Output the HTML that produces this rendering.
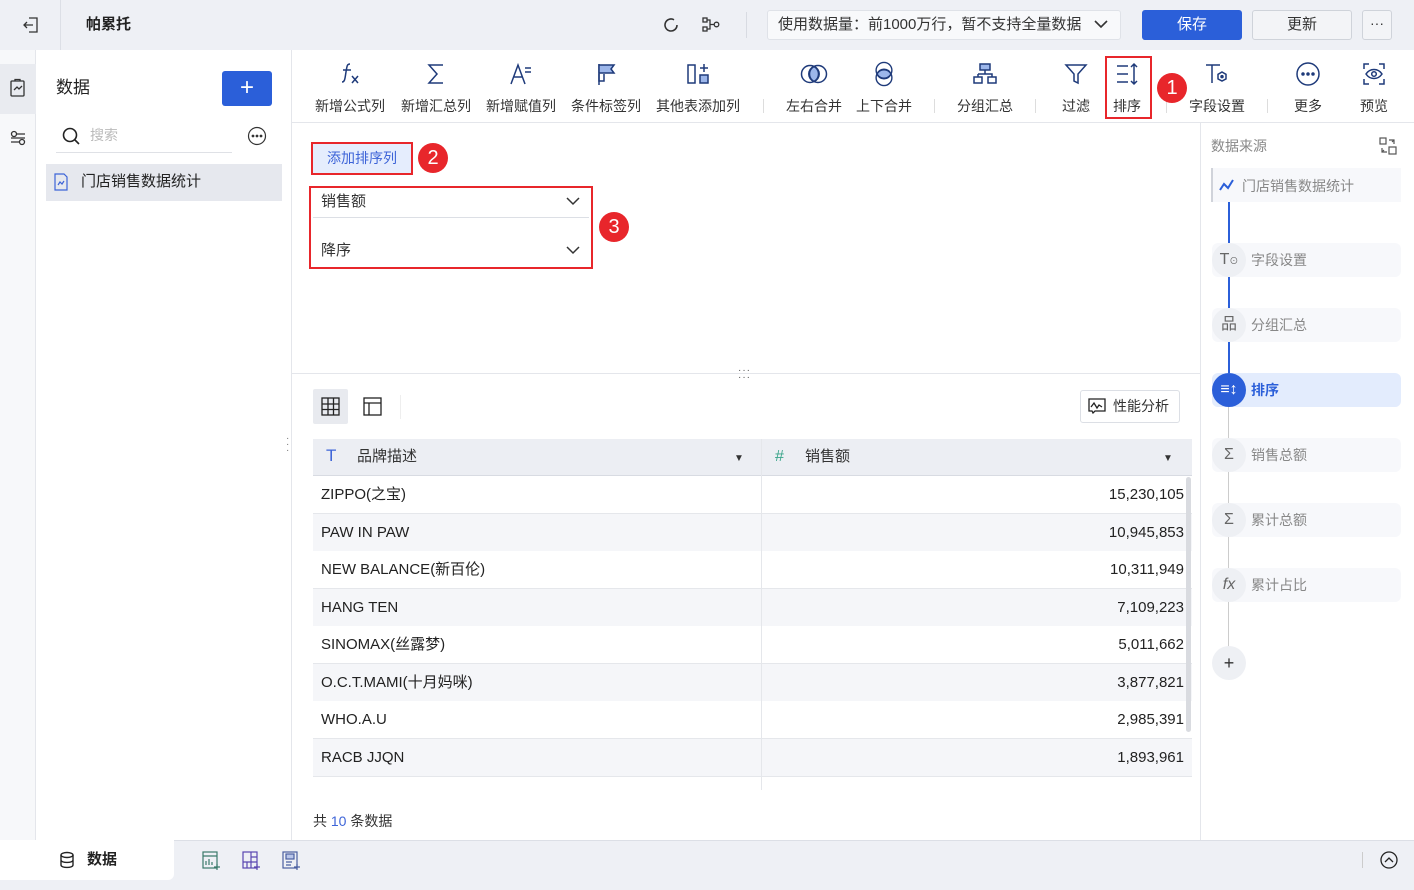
<!DOCTYPE html>
<html><head><meta charset="utf-8"><style>
*{box-sizing:border-box;margin:0;padding:0}
body{width:1414px;height:890px;overflow:hidden;position:relative;background:#fff;font-family:"Liberation Sans","Noto Sans CJK SC",sans-serif;color:#333;font-size:14px;line-height:18px}
.a{position:absolute}
.tb{text-align:center;width:90px;font-size:14px;color:#333;line-height:18px}
.tb svg{display:block;margin:0 auto 10px}
.sep{position:absolute;top:99px;width:1px;height:14px;background:#ddd}
.badge{position:absolute;width:30px;height:30px;border-radius:50%;background:#e8262b;color:#fff;font-size:20px;text-align:center;line-height:30px}
.row{position:absolute;left:313px;width:879px;height:38px;border-bottom:1px solid #e5e7eb;font-size:15px;color:#222;line-height:37px}
.row span{position:absolute;top:0}
.step{position:absolute;left:1212px;width:189px;height:34px;border-radius:6px;background:#f7f8fb;font-size:14px;color:#888}
.step i{position:absolute;left:0;top:0;width:34px;height:34px;border-radius:50%;background:#eef0f4;font-style:normal;text-align:center;line-height:34px;color:#666;font-size:16px}
.step b{position:absolute;left:39px;top:8px;font-weight:normal}
</style></head><body>
<!-- top bar -->
<div class="a" style="left:0;top:0;width:1414px;height:50px;background:#eef0f5"></div>
<div class="a" style="left:60px;top:0;width:1px;height:50px;background:#dcdfe6"></div>
<svg class="a" style="left:21px;top:15px" width="20" height="20" viewBox="0 0 20 20" fill="none" stroke="#333" stroke-width="1.3"><path d="M8 3h8v14H8M3 10h9M6 7l-3 3 3 3"/></svg>
<div class="a" style="left:86px;top:16px;font-size:15px;font-weight:bold;color:#222">帕累托</div>
<svg class="a" style="left:661px;top:15px" width="20" height="20" viewBox="0 0 20 20" fill="none" stroke="#333" stroke-width="1.6"><path d="M16 10a6 6 0 1 1-3-5.2M16 10a6 6 0 0 1-3 5.2"/></svg>
<svg class="a" style="left:701px;top:16px" width="20" height="18" viewBox="0 0 20 18" fill="none" stroke="#333" stroke-width="1.3"><rect x="2" y="2" width="4" height="4"/><rect x="2" y="11" width="4" height="4"/><path d="M6 4h3v9H6M9 8.5h4"/><circle cx="15.5" cy="8.5" r="2.3"/></svg>
<div class="a" style="left:746px;top:12px;width:1px;height:26px;background:#d8dbe2"></div>
<div class="a" style="left:767px;top:10px;width:354px;height:30px;background:#f8f9fb;border:1px solid #dfe2e8;border-radius:3px;font-size:15px;color:#333;padding:0 0 0 10px;line-height:28px">使用数据量：前1000万行，暂不支持全量数据</div>
<svg class="a" style="left:1093px;top:18px" width="16" height="12" viewBox="0 0 16 12" fill="none" stroke="#333" stroke-width="1.6"><path d="M2 3l6 6 6-6"/></svg>
<div class="a" style="left:1142px;top:10px;width:100px;height:30px;background:#2b5fd9;border-radius:3px;color:#fff;font-size:15px;text-align:center;line-height:30px">保存</div>
<div class="a" style="left:1252px;top:10px;width:100px;height:30px;background:#f3f4f7;border:1px solid #cfd3da;border-radius:3px;font-size:15px;text-align:center;line-height:28px">更新</div>
<div class="a" style="left:1362px;top:10px;width:30px;height:30px;background:#f3f4f7;border:1px solid #cfd3da;border-radius:3px;text-align:center;line-height:24px;font-size:14px">···</div>

<!-- left rail -->
<div class="a" style="left:0;top:50px;width:36px;height:790px;background:#f7f8fa;border-right:1px solid #e4e6eb"></div>
<div class="a" style="left:0;top:64px;width:36px;height:50px;background:#e9ebf0"></div>
<svg class="a" style="left:8px;top:78px" width="20" height="20" viewBox="0 0 20 20" fill="none" stroke="#333" stroke-width="1.3"><rect x="3" y="3" width="13" height="15" rx="1"/><path d="M7 3V1.5h5V3M6 12l3-3 2 2 3-3"/></svg>
<svg class="a" style="left:8px;top:128px" width="20" height="20" viewBox="0 0 20 20" fill="none" stroke="#333" stroke-width="1.3"><circle cx="6" cy="6" r="2.5"/><circle cx="14" cy="14" r="2.5"/><path d="M9 6h8M3 14h8M3 10h14"/></svg>
<!-- sidebar -->
<div class="a" style="left:36px;top:50px;width:256px;height:790px;background:#fff;border-right:1px solid #e4e6eb"></div>
<div class="a" style="left:56px;top:79px;font-size:17px;color:#222">数据</div>
<div class="a" style="left:222px;top:71px;width:50px;height:35px;background:#2b5fd9;border-radius:3px;color:#fff;font-size:24px;text-align:center;line-height:33px">+</div>
<svg class="a" style="left:61px;top:126px" width="20" height="20" viewBox="0 0 20 20" fill="none" stroke="#222" stroke-width="1.6"><circle cx="9" cy="9" r="6.5"/><path d="M14 14l4 4"/></svg>
<div class="a" style="left:90px;top:126px;font-size:14px;color:#bbb">搜索</div>
<div class="a" style="left:56px;top:152px;width:176px;height:1px;background:#dfe1e6"></div>
<svg class="a" style="left:247px;top:126px" width="20" height="20" viewBox="0 0 20 20" fill="none" stroke="#333" stroke-width="1.2"><circle cx="10" cy="10" r="8.5"/><circle cx="6" cy="10" r=".8" fill="#333"/><circle cx="10" cy="10" r=".8" fill="#333"/><circle cx="14" cy="10" r=".8" fill="#333"/></svg>
<div class="a" style="left:46px;top:164px;width:236px;height:37px;background:#e6e8ee"></div>
<svg class="a" style="left:53px;top:173px" width="16" height="18" viewBox="0 0 16 18" fill="none" stroke="#3d64d8" stroke-width="1.2"><path d="M2 1h9l3 3v13H2z"/><path d="M5 12l2-3 2 2 2-3"/></svg>
<div class="a" style="left:81px;top:173px;font-size:15px;color:#222">门店销售数据统计</div>
<div class="a" style="left:286px;top:436px;color:#777;font-size:10px;line-height:6px">·<br>·<br>·</div>

<!-- toolbar -->
<div class="a" style="left:292px;top:122px;width:1122px;height:1px;background:#e4e6eb"></div>
<div class="a tb" style="left:305px;top:61px"><svg width="26" height="26" viewBox="0 0 26 26" fill="none" stroke="#1e3a7a" stroke-width="1.5"><path d="M13 3c-3 0-3 2-4 8s-1 10-4 10M6 9h8M15 15l6 7M21 15l-6 7"/></svg>新增公式列</div>
<div class="a tb" style="left:391px;top:61px"><svg width="26" height="26" viewBox="0 0 26 26" fill="none" stroke="#1e3a7a" stroke-width="1.5"><path d="M20 4H6l8 9-8 9h14"/></svg>新增汇总列</div>
<div class="a tb" style="left:476px;top:61px"><svg width="26" height="26" viewBox="0 0 26 26" fill="none" stroke="#1e3a7a" stroke-width="1.5"><path d="M3 23L10 4l7 19M5.5 16h9M17 7h6M17 11h6"/></svg>新增赋值列</div>
<div class="a tb" style="left:561px;top:61px"><svg width="26" height="26" viewBox="0 0 26 26" fill="none" stroke="#1e3a7a" stroke-width="1.5"><path d="M6 3v21"/><path d="M6 4h15l-3 4 3 4H6z" fill="#9cb6ea"/><path d="M6 13v7h5v-7"/></svg>条件标签列</div>
<div class="a tb" style="left:653px;top:61px"><svg width="26" height="26" viewBox="0 0 26 26" fill="none" stroke="#1e3a7a" stroke-width="1.5"><rect x="3" y="4" width="7" height="18"/><rect x="15" y="14" width="8" height="8" fill="#9cb6ea"/><path d="M19 3v8M15 7h8"/></svg>其他表添加列</div>
<div class="sep" style="left:763px"></div>
<div class="a tb" style="left:769px;top:61px"><svg width="28" height="26" viewBox="0 0 28 26" fill="none" stroke="#1e3a7a" stroke-width="1.5"><path d="M14 5.5a8 8 0 0 1 0 15a8 8 0 0 1 0-15z" fill="#9cb6ea"/><circle cx="10" cy="13" r="8.5"/><circle cx="18" cy="13" r="8.5"/></svg>左右合并</div>
<div class="a tb" style="left:839px;top:61px"><svg width="26" height="26" viewBox="0 0 26 28" fill="none" stroke="#1e3a7a" stroke-width="1.5"><path d="M5.5 14a8 8 0 0 1 15 0a8 8 0 0 1-15 0z" fill="#9cb6ea"/><circle cx="13" cy="10" r="8.5"/><circle cx="13" cy="18" r="8.5"/></svg>上下合并</div>
<div class="sep" style="left:934px"></div>
<div class="a tb" style="left:940px;top:61px"><svg width="26" height="26" viewBox="0 0 26 26" fill="none" stroke="#1e3a7a" stroke-width="1.5"><rect x="8" y="3" width="10" height="6" fill="#9cb6ea"/><path d="M13 9v4M6 13h14v3M6 13v3"/><rect x="2" y="16" width="8" height="6"/><rect x="16" y="16" width="8" height="6"/></svg>分组汇总</div>
<div class="sep" style="left:1035px"></div>
<div class="a tb" style="left:1031px;top:61px"><svg width="26" height="26" viewBox="0 0 26 26" fill="none" stroke="#1e3a7a" stroke-width="1.5"><path d="M3 4h20l-8 9v9l-4-2v-7z"/></svg>过滤</div>
<div class="a tb" style="left:1082px;top:61px"><svg width="26" height="26" viewBox="0 0 26 26" fill="none" stroke="#1e3a7a" stroke-width="1.5"><path d="M3 5h11M3 13h11M3 21h11M20 3v20M17 6l3-3 3 3M17 20l3 3 3-3"/></svg>排序</div>
<div class="a" style="left:1105px;top:56px;width:47px;height:63px;border:2px solid #e8262b"></div>
<div class="sep" style="left:1166px"></div>
<div class="badge" style="left:1157px;top:73px">1</div>
<div class="a tb" style="left:1172px;top:61px"><svg width="28" height="26" viewBox="0 0 28 26" fill="none" stroke="#1e3a7a" stroke-width="1.5"><path d="M3 4h14M9 4v18"/><path d="M19 11l4 2.3v4.6L19 20l-4-2.1v-4.6z"/><circle cx="19" cy="15.6" r="1" fill="#1e3a7a"/></svg>字段设置</div>
<div class="sep" style="left:1267px"></div>
<div class="a tb" style="left:1263px;top:61px"><svg width="26" height="26" viewBox="0 0 26 26" fill="none" stroke="#1e3a7a" stroke-width="1.5"><circle cx="13" cy="13" r="11"/><circle cx="8" cy="13" r="1" fill="#1e3a7a"/><circle cx="13" cy="13" r="1" fill="#1e3a7a"/><circle cx="18" cy="13" r="1" fill="#1e3a7a"/></svg>更多</div>
<div class="a tb" style="left:1329px;top:61px"><svg width="26" height="26" viewBox="0 0 26 26" fill="none" stroke="#1e3a7a" stroke-width="1.5"><path d="M3 8V3h5M18 3h5v5M23 18v5h-5M8 23H3v-5M5 13c4-6 12-6 16 0c-4 6-12 6-16 0z"/><circle cx="13" cy="13" r="2.3"/></svg>预览</div>

<!-- config area -->
<div class="a" style="left:311px;top:142px;width:102px;height:33px;background:#e5edfd;border:2px solid #e8262b;color:#3d64d8;font-size:14px;text-align:center;line-height:29px">添加排序列</div>
<div class="badge" style="left:418px;top:143px">2</div>
<div class="a" style="left:309px;top:186px;width:284px;height:83px;border:2px solid #e8262b"></div>
<div class="a" style="left:321px;top:193px;font-size:15px">销售额</div>
<svg class="a" style="left:566px;top:196px" width="14" height="10" viewBox="0 0 14 10" fill="none" stroke="#333" stroke-width="1.5"><path d="M1 2l6 6 6-6"/></svg>
<div class="a" style="left:313px;top:217px;width:276px;height:1px;background:#dcdfe5"></div>
<div class="a" style="left:321px;top:242px;font-size:15px">降序</div>
<svg class="a" style="left:566px;top:245px" width="14" height="10" viewBox="0 0 14 10" fill="none" stroke="#333" stroke-width="1.5"><path d="M1 2l6 6 6-6"/></svg>
<div class="badge" style="left:599px;top:212px">3</div>

<div class="a" style="left:292px;top:373px;width:908px;height:1px;background:#e4e6eb"></div>
<div class="a" style="left:738px;top:367px;font-size:10px;color:#555;letter-spacing:1px;line-height:7px">···<br>···</div>

<!-- table controls -->
<div class="a" style="left:313px;top:389px;width:35px;height:35px;background:#e8eaef;border-radius:2px"></div>
<svg class="a" style="left:321px;top:397px" width="19" height="19" viewBox="0 0 19 19" fill="none" stroke="#222" stroke-width="1.3"><rect x="1" y="1" width="17" height="17"/><path d="M1 7h17M1 12.5h17M7 1v17M12.5 1v17"/></svg>
<svg class="a" style="left:363px;top:397px" width="19" height="19" viewBox="0 0 19 19" fill="none" stroke="#222" stroke-width="1.3"><rect x="1" y="1" width="17" height="17"/><path d="M1 6h17M6 6v12"/></svg>
<div class="a" style="left:400px;top:395px;width:1px;height:24px;background:#eee"></div>
<div class="a" style="left:1080px;top:390px;width:100px;height:33px;border:1px solid #dcdfe5;border-radius:3px;font-size:14px;padding:0 0 0 32px;line-height:31px">性能分析</div>
<svg class="a" style="left:1088px;top:398px" width="18" height="16" viewBox="0 0 18 16" fill="none" stroke="#222" stroke-width="1.3"><path d="M1 1h16v12H7l-2 2-1-2H1z"/><path d="M3 9l3-4 3 5 2-3 3 2"/></svg>

<!-- table -->
<div class="a" style="left:313px;top:439px;width:879px;height:38px;background:#eceef3;border-bottom:2px solid #d8dbe2"></div>
<div class="a" style="left:326px;top:447px;color:#3d64d8;font-size:17px">T</div>
<div class="a" style="left:357px;top:448px;font-size:15px">品牌描述</div>
<div class="a" style="left:734px;top:450px;font-size:10px">▼</div>
<div class="a" style="left:775px;top:448px;color:#3aa58a;font-size:16px">#</div>
<div class="a" style="left:805px;top:448px;font-size:15px">销售额</div>
<div class="a" style="left:1163px;top:450px;font-size:10px">▼</div>

<div class="row" style="top:476px;background:#fff"><span style="left:8px">ZIPPO(之宝)</span><span style="right:8px">15,230,105</span></div>
<div class="row" style="top:514px;background:#f5f6f9"><span style="left:8px">PAW IN PAW</span><span style="right:8px">10,945,853</span></div>
<div class="row" style="top:551px;background:#fff"><span style="left:8px">NEW BALANCE(新百伦)</span><span style="right:8px">10,311,949</span></div>
<div class="row" style="top:589px;background:#f5f6f9"><span style="left:8px">HANG TEN</span><span style="right:8px">7,109,223</span></div>
<div class="row" style="top:626px;background:#fff"><span style="left:8px">SINOMAX(丝露梦)</span><span style="right:8px">5,011,662</span></div>
<div class="row" style="top:664px;background:#f5f6f9"><span style="left:8px">O.C.T.MAMI(十月妈咪)</span><span style="right:8px">3,877,821</span></div>
<div class="row" style="top:701px;background:#fff"><span style="left:8px">WHO.A.U</span><span style="right:8px">2,985,391</span></div>
<div class="row" style="top:739px;background:#f5f6f9"><span style="left:8px">RACB JJQN</span><span style="right:8px">1,893,961</span></div>
<div class="row" style="top:777px;height:13px;background:#fff;border:none;overflow:hidden"></div>
<div class="a" style="left:761px;top:439px;width:1px;height:351px;background:#e5e7eb"></div>
<div class="a" style="left:1186px;top:477px;width:5px;height:255px;background:#d9dbe0;border-radius:3px"></div>
<div class="a" style="left:313px;top:812px;font-size:14px">共 <span style="color:#3d64d8">10</span> 条数据</div>

<!-- right panel -->
<div class="a" style="left:1200px;top:122px;width:1px;height:718px;background:#e4e6eb"></div>
<div class="a" style="left:1211px;top:137px;font-size:14px;color:#888">数据来源</div>
<svg class="a" style="left:1379px;top:137px" width="18" height="18" viewBox="0 0 18 18" fill="none" stroke="#555" stroke-width="1.2"><rect x="1" y="1" width="6" height="6"/><rect x="10" y="10" width="7" height="7"/><path d="M10 3h5v4M13 5l2-2M8 15H3v-4M5 13l-2 2"/></svg>
<div class="a" style="left:1211px;top:168px;width:190px;height:34px;background:#f7f8fb;border-left:2px solid #d0d3da"></div>
<svg class="a" style="left:1218px;top:177px" width="18" height="16" viewBox="0 0 18 16" fill="none" stroke="#2b5fd9" stroke-width="2"><path d="M2 13l4-6 4 4 5-8"/></svg>
<div class="a" style="left:1242px;top:177px;font-size:14px;color:#888">门店销售数据统计</div>
<div class="a" style="left:1228px;top:202px;width:2px;height:188px;background:#2b5fd9"></div>
<div class="a" style="left:1228px;top:390px;width:1px;height:270px;background:#ccc"></div>
<div class="step" style="top:243px"><i>T<span style="font-size:9px">⊙</span></i><b>字段设置</b></div>
<div class="step" style="top:308px"><i>品</i><b>分组汇总</b></div>
<div class="step" style="top:373px;background:#e3ecfd"><i style="background:#2b5fd9;color:#fff;font-weight:bold">≡↕</i><b style="color:#2b5fd9;font-weight:bold">排序</b></div>
<div class="step" style="top:438px"><i>Σ</i><b>销售总额</b></div>
<div class="step" style="top:503px"><i>Σ</i><b>累计总额</b></div>
<div class="step" style="top:568px"><i style="font-style:italic">fx</i><b>累计占比</b></div>
<div class="a" style="left:1212px;top:646px;width:34px;height:34px;border-radius:50%;background:#eef0f4;text-align:center;line-height:34px;font-size:18px;color:#333">+</div>

<!-- bottom bar -->
<div class="a" style="left:0;top:840px;width:1414px;height:50px;background:#eef0f5;border-top:1px solid #dcdfe6"></div>
<div class="a" style="left:0;top:840px;width:174px;height:40px;background:#fff;border-radius:0 0 6px 0"></div>
<svg class="a" style="left:58px;top:851px" width="18" height="18" viewBox="0 0 18 18" fill="none" stroke="#222" stroke-width="1.4"><ellipse cx="9" cy="4" rx="6" ry="2.5"/><path d="M3 4v10c0 3.3 12 3.3 12 0V4M3 9c0 3.3 12 3.3 12 0"/></svg>
<div class="a" style="left:87px;top:851px;font-size:15px;font-weight:bold;color:#222">数据</div>
<svg class="a" style="left:202px;top:851px" width="20" height="20" viewBox="0 0 20 20" fill="none" stroke="#3a7a6a" stroke-width="1.2"><rect x="1" y="1" width="14" height="16"/><path d="M1 5h14M4 14v-4M7 14V8M10 14v-3M15 13v6M12 16h6"/></svg>
<svg class="a" style="left:242px;top:851px" width="20" height="20" viewBox="0 0 20 20" fill="none" stroke="#5a46b0" stroke-width="1.2"><rect x="1" y="1" width="14" height="16"/><path d="M1 11h14M9 1v16M9 6h6M5 11v6M15 13v6M12 16h6"/></svg>
<svg class="a" style="left:282px;top:851px" width="20" height="20" viewBox="0 0 20 20" fill="none" stroke="#4a5fa0" stroke-width="1.2"><rect x="1" y="1" width="14" height="16"/><rect x="4" y="3" width="8" height="5" fill="#b9c6ea"/><path d="M4 11h6M4 14h5M15 13v6M12 16h6"/></svg>
<div class="a" style="left:1362px;top:852px;width:1px;height:16px;background:#ccc"></div>
<svg class="a" style="left:1380px;top:851px" width="18" height="18" viewBox="0 0 18 18" fill="none" stroke="#222" stroke-width="1.3"><circle cx="9" cy="9" r="8"/><path d="M5 11l4-4 4 4"/></svg>
</body></html>
